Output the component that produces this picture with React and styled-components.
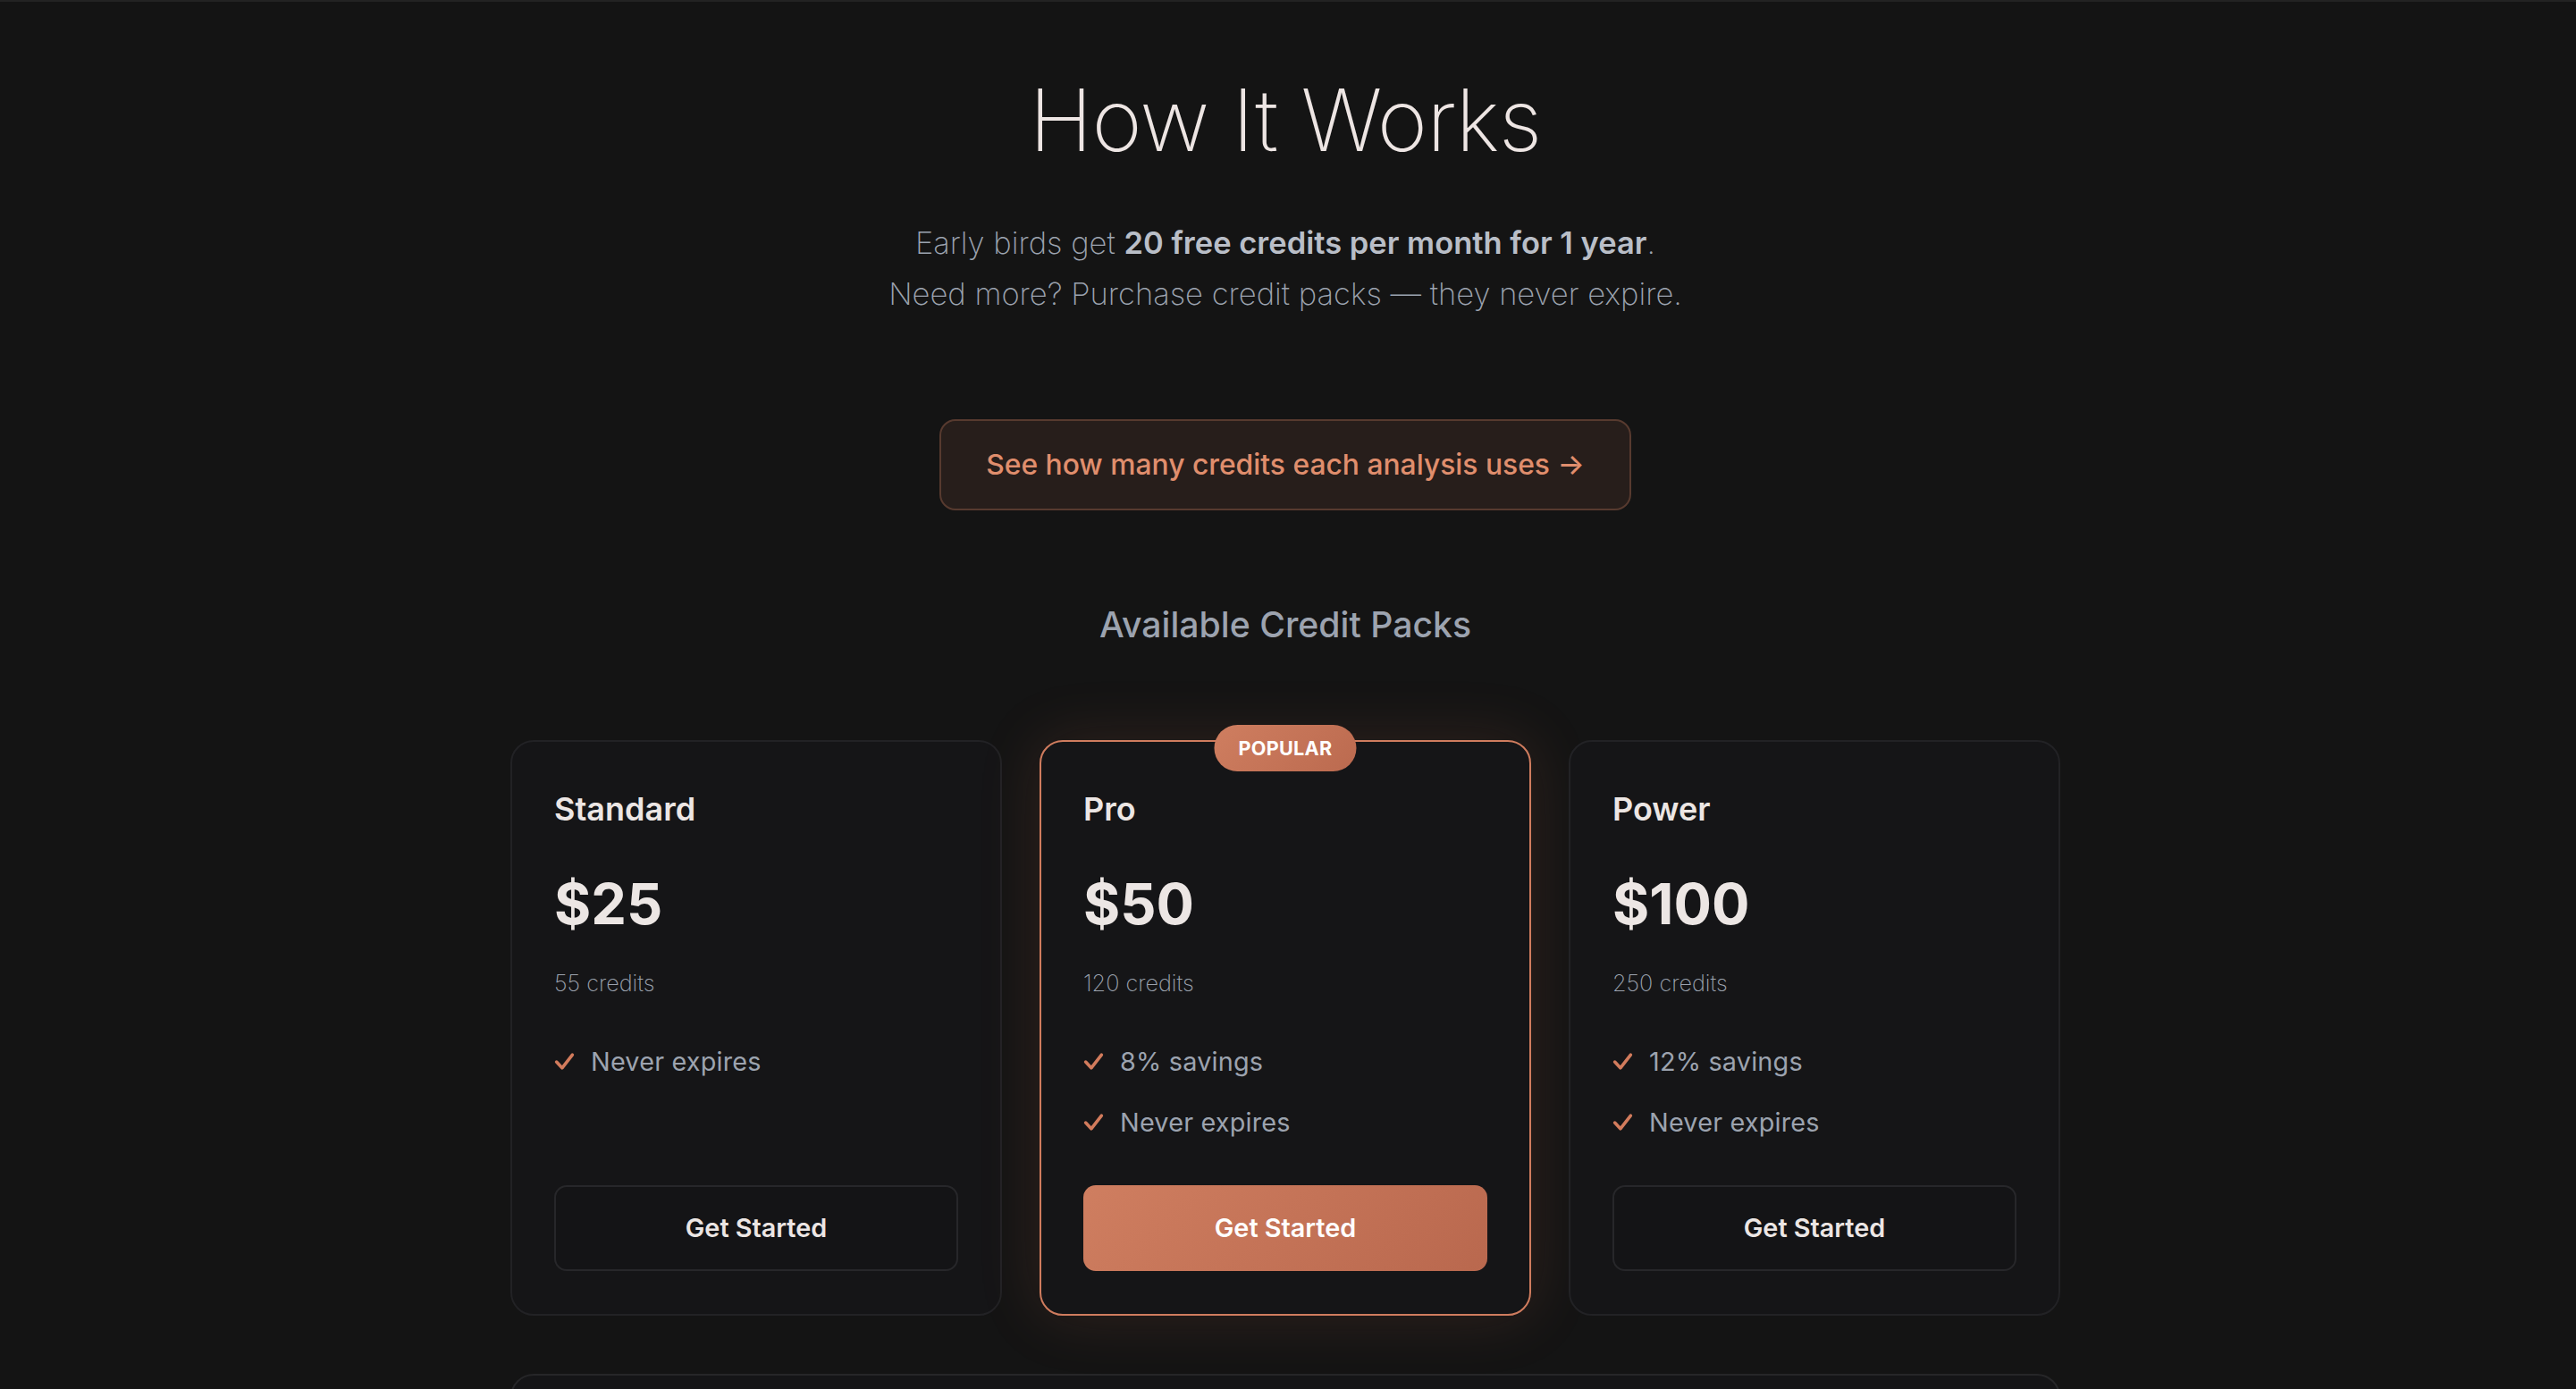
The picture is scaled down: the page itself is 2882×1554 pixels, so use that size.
import React from 'react'
import styled, { createGlobalStyle, css } from 'styled-components'

const GlobalStyle = createGlobalStyle`
  html, body {
    margin: 0;
    padding: 0;
    background: #141414;
  }
  body {
    font-family: Inter, "Noto Sans", "Liberation Sans", sans-serif;
    -webkit-font-smoothing: antialiased;
  }
  * { box-sizing: border-box; }
`

const packs = [
  { name: 'Standard', price: '$25', credits: '55 credits', features: ['Never expires'] },
  { name: 'Pro', price: '$50', credits: '120 credits', features: ['8% savings', 'Never expires'], popular: true },
  { name: 'Power', price: '$100', credits: '250 credits', features: ['12% savings', 'Never expires'] },
]

const CheckIcon = () => (
  <svg width="23" height="23" viewBox="0 0 22 22" fill="none">
    <polyline points="2.5,11.5 8.5,18 19.5,4" stroke="#d27b5c" strokeWidth="3.4" strokeLinecap="round" strokeLinejoin="round" />
  </svg>
)

const App = () => {
  return (
    <>
      <GlobalStyle />
      <Page>
        <Title>How It Works</Title>
        <Lead>
          Early birds get <strong>20 free credits per month for 1 year</strong>.
          <br />
          Need more? Purchase credit packs — they never expire.
        </Lead>
        <CtaRow>
          <CtaButton>See how many credits each analysis uses →</CtaButton>
        </CtaRow>
        <SectionTitle>Available Credit Packs</SectionTitle>
        <Container>
          <Cards>
            {packs.map((p) => (
              <Card key={p.name} $popular={p.popular}>
                {p.popular && <Badge>POPULAR</Badge>}
                <PackName>{p.name}</PackName>
                <Price>{p.price}</Price>
                <Credits>{p.credits}</Credits>
                <Features>
                  {p.features.map((f) => (
                    <Feature key={f}>
                      <CheckIcon />
                      <span>{f}</span>
                    </Feature>
                  ))}
                </Features>
                <BuyButton $primary={p.popular}>Get Started</BuyButton>
              </Card>
            ))}
          </Cards>
          <NextCard />
        </Container>
      </Page>
    </>
  )
}

const Page = styled.main`
  min-height: 100vh;
  border-top: 2px solid #232323;
  padding: 80px 6px 0 0;
  display: flex;
  flex-direction: column;
  align-items: center;
  overflow: hidden;
`

const Title = styled.h1`
  margin: 0;
  font-size: 96px;
  line-height: 1.1;
  font-weight: 200;
  color: #ede5e3;
  letter-spacing: -0.8px;
`

const Lead = styled.p`
  margin: 55px 0 0;
  text-align: center;
  font-size: 34.5px;
  line-height: 57px;
  font-weight: 250;
  color: #9ca3af;

  strong {
    font-weight: 600;
    color: #b9bec7;
  }
`

const CtaRow = styled.div`
  margin-top: 112px;
`

const CtaButton = styled.button`
  height: 102px;
  padding: 0 50px;
  border-radius: 18px;
  border: 2px solid #573a2f;
  background: #271e1b;
  color: #e08e6d;
  font-family: inherit;
  font-size: 31.8px;
  font-weight: 500;
  cursor: pointer;
`

const SectionTitle = styled.h2`
  margin: 100px 0 0;
  font-size: 39.2px;
  line-height: 56px;
  font-weight: 500;
  color: #9ca3af;
`

const Container = styled.div`
  width: 1734px;
  margin-top: 101px;
`

const Cards = styled.div`
  display: grid;
  grid-template-columns: repeat(3, 1fr);
  gap: 42px;
`

const Card = styled.div`
  position: relative;
  display: flex;
  flex-direction: column;
  padding: 50px 47px 48px;
  border-radius: 26px;
  background: #151517;
  border: 2px solid #222225;

  ${(p) =>
    p.$popular &&
    css`
      border-color: #cf7c5e;
      box-shadow: 0 0 70px rgba(200, 110, 78, 0.16);
    `}
`

const Badge = styled.div`
  position: absolute;
  top: -19px;
  left: 50%;
  transform: translateX(-50%);
  height: 52px;
  padding: 0 27px;
  display: flex;
  align-items: center;
  border-radius: 26px;
  background: linear-gradient(135deg, #cf7e60, #bb6a4f);
  color: #ffffff;
  font-size: 21.6px;
  font-weight: 700;
  letter-spacing: 0.3px;
`

const PackName = styled.h3`
  margin: 0 0 45px;
  font-size: 36px;
  line-height: 50px;
  font-weight: 600;
  color: #ece6e4;
`

const Price = styled.div`
  margin-bottom: 34px;
  font-size: 63px;
  line-height: 72px;
  font-weight: 700;
  color: #ece6e4;
`

const Credits = styled.div`
  margin-bottom: 47px;
  font-size: 25.2px;
  line-height: 38px;
  font-weight: 250;
  color: #9ca3af;
`

const Features = styled.ul`
  list-style: none;
  margin: 0 0 49px;
  padding: 0;
  display: flex;
  flex-direction: column;
  gap: 25px;
  flex: 1;
`

const Feature = styled.li`
  display: flex;
  align-items: center;
  gap: 18px;
  font-size: 28.8px;
  line-height: 43px;
  font-weight: 400;
  letter-spacing: 0.2px;
  color: #9ca3af;
`

const BuyButton = styled.button`
  height: 96px;
  width: 100%;
  border-radius: 14px;
  font-family: inherit;
  font-size: 28.8px;
  font-weight: 600;
  cursor: pointer;
  border: 2px solid #27272a;
  background: #141416;
  color: #ece6e4;

  ${(p) =>
    p.$primary &&
    css`
      border: none;
      background: linear-gradient(135deg, #cf7e60, #b9684e);
      color: #ffffff;
    `}
`

const NextCard = styled.div`
  margin-top: 65px;
  height: 200px;
  border-radius: 26px;
  border: 2px solid #262628;
  background: #151517;
`

export default App
